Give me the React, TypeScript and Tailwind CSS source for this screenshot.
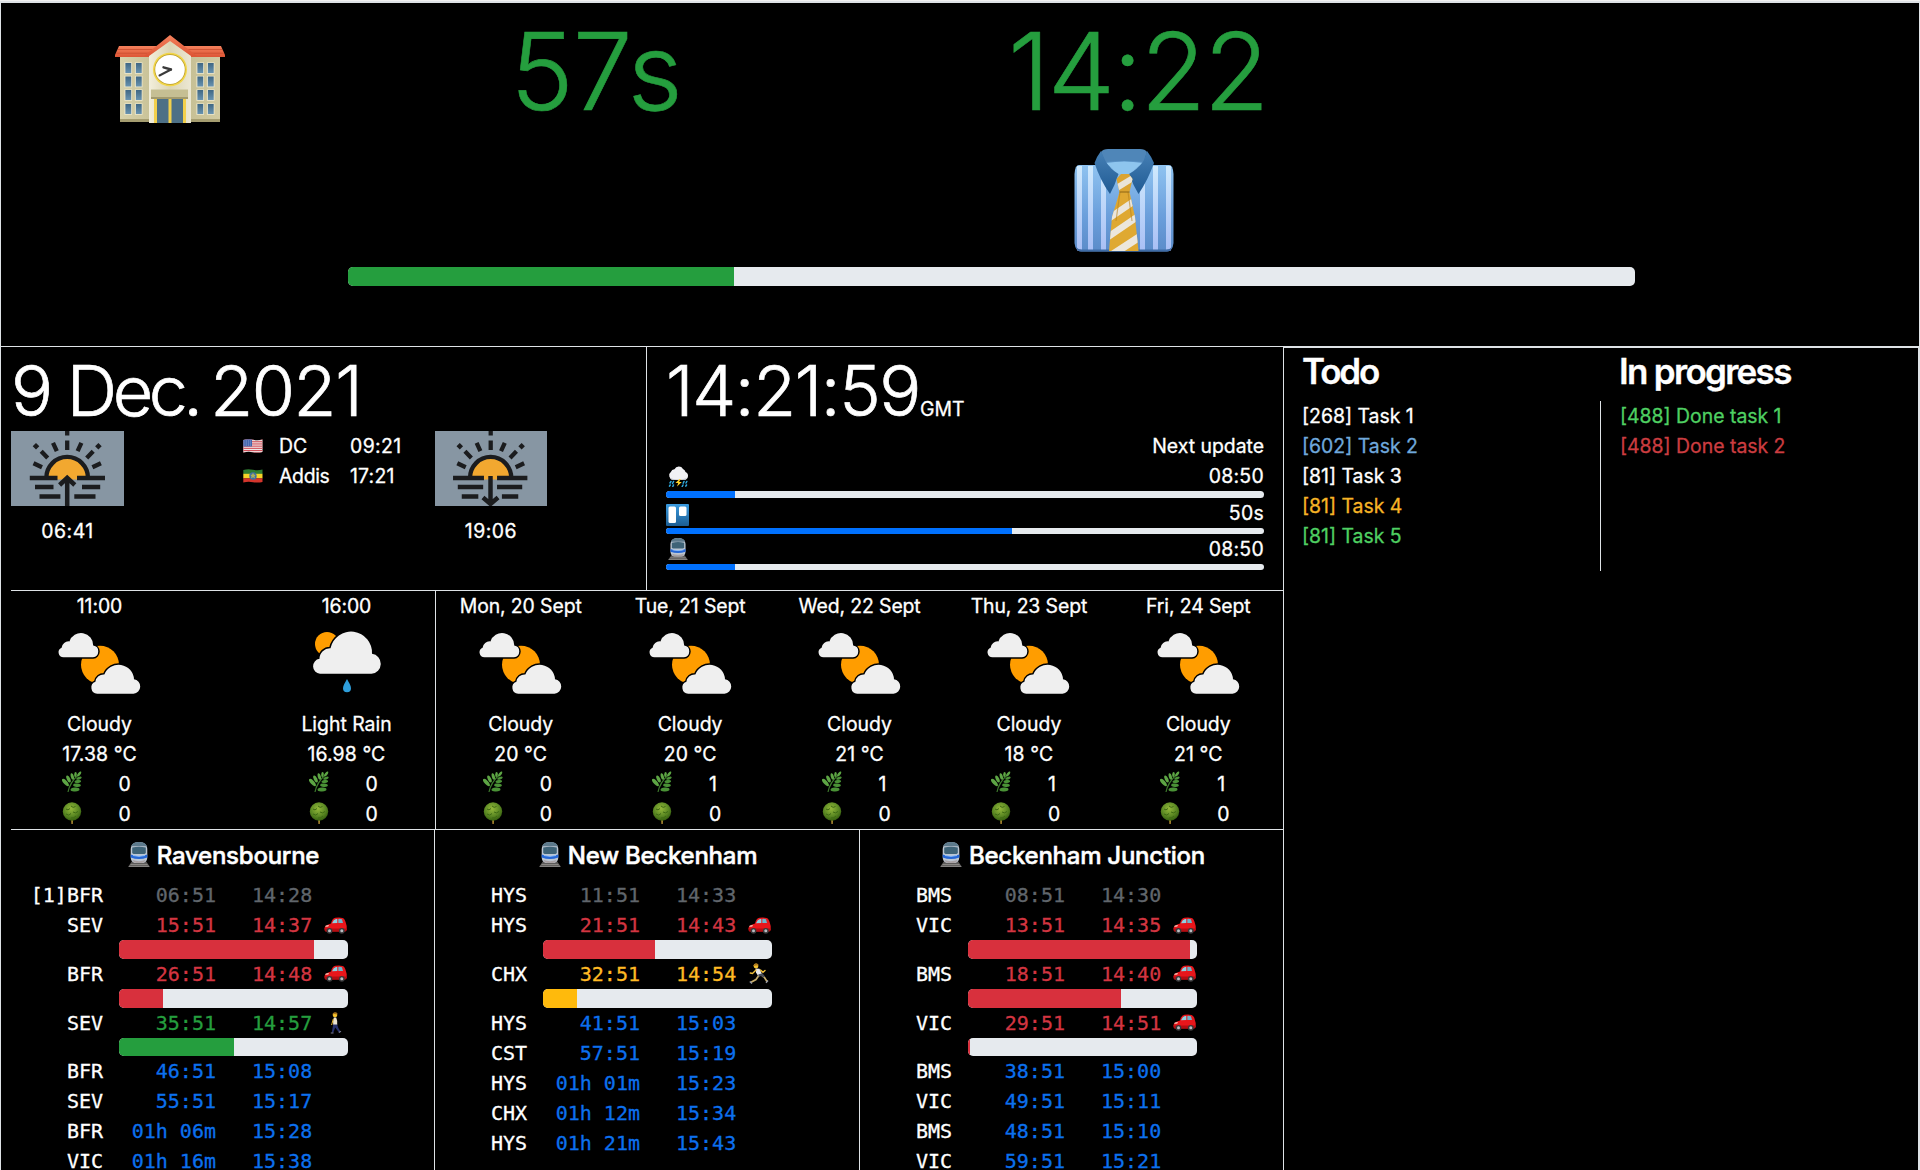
import React from "react";

/* ---------- Icons ---------- */

function SchoolIcon() {
  return (
    <svg viewBox="0 0 110 88" preserveAspectRatio="none" className="h-[88px] w-[110px]">
      <defs>
        <linearGradient id="wall" x1="0" x2="1">
          <stop offset="0" stopColor="#d8d2ab" />
          <stop offset="0.5" stopColor="#bfb88c" />
          <stop offset="1" stopColor="#d2cba2" />
        </linearGradient>
        <linearGradient id="tower" x1="0" x2="1">
          <stop offset="0" stopColor="#f3efdc" />
          <stop offset="0.5" stopColor="#dcd5b4" />
          <stop offset="1" stopColor="#ece8d4" />
        </linearGradient>
        <linearGradient id="roof" x1="0" x2="0" y1="0" y2="1">
          <stop offset="0" stopColor="#f4815c" />
          <stop offset="1" stopColor="#dd5535" />
        </linearGradient>
        <linearGradient id="pane" x1="0" x2="0" y1="0" y2="1">
          <stop offset="0" stopColor="#3f6784" />
          <stop offset="1" stopColor="#6893b0" />
        </linearGradient>
      </defs>
      <rect x="5" y="20" width="100" height="67" fill="url(#wall)" />
      <rect x="5" y="84" width="100" height="3" fill="#a59d70" />
      <path d="M4 11H106L110 20V22H0V20Z" fill="url(#roof)" />
      <path d="M3 14.500H107M1.500 18.200H108.500" stroke="#c94c2f" strokeWidth="0.800" />
      <path d="M34 20L55 3L76 20V88H34Z" fill="url(#tower)" />
      <path d="M55 0L82 21H76L55 6L34 21H29Z" fill="url(#roof)" />
      {[28, 41.5, 55, 69].map((y) =>
        [10, 20.5, 82, 92.5].map((x) => (
          <g key={`${x}-${y}`}>
            <rect x={x - 0.6} y={y - 0.6} width="7.600" height="11.400" fill="#ebe6cc" />
            <rect x={x + 0.4} y={y} width="5.800" height="10" fill="url(#pane)" />
          </g>
        )),
      )}
      <ellipse cx="55" cy="34.500" rx="17" ry="16.800" fill="#f2d648" />
      <ellipse cx="55" cy="34.500" rx="15.500" ry="15.200" fill="#b99b2c" />
      <ellipse cx="55" cy="34.500" rx="14.800" ry="14.600" fill="#fff" />
      <path d="M44.500 40.500L56 34.500" stroke="#3b3b3b" strokeWidth="2" strokeLinecap="round" />
      <path d="M48.500 32.300L56 34.500" stroke="#3b3b3b" strokeWidth="2.400" strokeLinecap="round" />
      <rect x="39" y="63" width="32" height="25" fill="#f2d04c" />
      <rect x="42" y="63" width="11.500" height="25" fill="#4d7086" />
      <rect x="56.500" y="63" width="11.500" height="25" fill="#4d7086" />
      <rect x="36" y="54.500" width="37" height="9" fill="#c6bf93" />
      <rect x="36" y="62" width="37" height="2" fill="#a39b6e" />
    </svg>
  );
}

function ShirtIcon() {
  return (
    <svg viewBox="0 0 100 103" preserveAspectRatio="none" className="h-[103px] w-[100px]">
      <defs>
        <linearGradient id="cloth" x1="0" x2="0" y1="0" y2="1">
          <stop offset="0" stopColor="#8fc3f0" />
          <stop offset="0.6" stopColor="#6a9edb" />
          <stop offset="1" stopColor="#5b8cc9" />
        </linearGradient>
        <linearGradient id="stripe" x1="0" x2="0" y1="0" y2="1">
          <stop offset="0" stopColor="#cfeafd" />
          <stop offset="1" stopColor="#a9bff5" />
        </linearGradient>
        <linearGradient id="collar" x1="0" x2="0" y1="0" y2="1">
          <stop offset="0" stopColor="#4680b5" />
          <stop offset="1" stopColor="#1f5a93" />
        </linearGradient>
        <clipPath id="tieShape">
          <path d="M45.500 43H55.500L61 68L64.500 102H35L38 68Z" />
        </clipPath>
        <clipPath id="knotShape">
          <path d="M47 25H55L58.500 30L55.500 43H45.500L42.500 30Z" />
        </clipPath>
      </defs>
      <path d="M5 16H95Q99 16 99.500 25V94Q98.500 102.500 93 102.500H7Q1.500 102.500 0.500 94V25Q1 16 5 16Z" fill="url(#cloth)" />
      {[3, 14, 27, 66, 79, 92].map((x) => (
        <rect key={x} x={x} y="17" width="5" height="84.500" fill="url(#stripe)" />
      ))}
      <path d="M2 98Q3 102.500 7 102.500H93Q97 102.500 98 98Q96 100.500 92 100.500H8Q4 100.500 2 98Z" fill="#3f6ca6" />
      <path d="M32 1H69L72 14L50 26L28 14Z" fill="#5d95c8" />
      <path d="M32 14Q50 11 69 14L55 25H44Z" fill="#8ec5ee" />
      <path d="M27 3Q29 0 34 0H66Q71 0 73 3L70 13Q50 11 31 13Z" fill="#4f86b8" />
      <path d="M27 2Q23 7 20.500 14Q26 31 36 45Q41 36 44.500 25Q36 20 31.500 12Z" fill="url(#collar)" />
      <path d="M73 2Q77 7 80 14Q74 31 64.500 45Q59 36 55 25Q64 20 69.500 12Z" fill="url(#collar)" />
      <path d="M47 25H55L58.500 30L55.500 43H45.500L42.500 30Z" fill="#dba431" />
      <path d="M40 37L60 25V32L42 43Z" fill="#e9e4d8" clipPath="url(#knotShape)" />
      <g clipPath="url(#tieShape)">
        <rect x="34" y="43" width="32" height="60" fill="#dfa932" />
        <path d="M34 66L66 44V52L34 74Z" fill="#ece7dc" />
        <path d="M34 84L66 62V70L34 92Z" fill="#ece7dc" />
        <path d="M34 104L66 83V92L34 113Z" fill="#ece7dc" />
        <path d="M46 43L42 72M54 43L58 72" stroke="#b8831f" strokeWidth="1.200" opacity="0.600" />
      </g>
      <path d="M45.500 43H55.500" stroke="#8c6414" strokeWidth="1" />
    </svg>
  );
}

function SunHorizonIcon({ rising }: { rising: boolean }) {
  return (
    <svg viewBox="0 0 113 75" preserveAspectRatio="none" className="h-[75px] w-full bg-[#8796a3]">
      <path d="M35.300 46.500A20.800 21 0 0 1 77 46.500V49H35.300Z" fill="#f2a830" />
      <rect x="30" y="48.500" width="52" height="3" fill="#8796a3" />
      <g stroke="#1b1c1e" strokeWidth="4.300" fill="none">
        <path d="M35.300 47A20.800 21 0 0 1 77 47" />
        <path d="M56.200 0V4.500M56.200 9.500V19M42 11.800L45.800 20.200M70.400 11.800L66.600 20.200M30.200 20.300L36.700 27M82.200 20.300L75.700 27M22.500 32.300L31 36.300M89.900 32.300L81.400 36.300" />
        {rising ? (
          <>
            <path d="M18.800 47H46.500M66 47H94M24 56H42.500M71 56H89.200M28.500 65.500H49.400M63.300 65.500H84.500" />
            <path d="M56.200 75V48M48.600 54L56.200 46.800L63.800 54" strokeWidth="4.500" />
          </>
        ) : (
          <>
            <path d="M18.200 47H49.400M62.600 47H93.200M23 56H48.600M62.600 56H88M27 65.500H43.700M67.500 65.500H84" />
            <path d="M56 45V72M48.400 66.500L56 73L63.600 66.500" strokeWidth="4.500" />
          </>
        )}
      </g>
      <path d="M25 12L28.300 15.300L25 18.600L21.700 15.300ZM87.400 12L90.700 15.300L87.400 18.600L84.100 15.300Z" fill="#1b1c1e" />
    </svg>
  );
}

const backCloud =
  "M5.500 25.300A5 5 0 0 1 3.600 15.700A7 7 0 0 1 11.400 9.400A12.200 12.200 0 0 1 35.200 13.600A5.900 5.900 0 0 1 35 25.300Z";
const frontCloud =
  "M39.200 61.800A6.200 6.200 0 0 1 37.400 49.800A8.300 8.300 0 0 1 46.300 42.500A15.400 15.400 0 0 1 76 47.300A7.300 7.300 0 0 1 75.500 61.800Z";

function CloudyIcon() {
  return (
    <svg viewBox="0 0 83 62" className="h-[62px] w-[83px] overflow-visible">
      <circle cx="42" cy="32.700" r="19" fill="#ff9d00" />
      <path d={backCloud} fill="#efefef" stroke="#000" strokeWidth="3" paintOrder="stroke" />
      <path d={frontCloud} fill="#efefef" stroke="#000" strokeWidth="3" paintOrder="stroke" />
    </svg>
  );
}

function LightRainIcon() {
  return (
    <svg viewBox="0 0 70 62" className="h-[62px] w-[70px] overflow-visible">
      <circle cx="15" cy="12" r="12" fill="#ff9d00" />
      <path
        d="M8 41.700A7.500 7.500 0 0 1 7.500 26.800A10.500 10.500 0 0 1 18.500 16.200A21 21 0 0 1 60 21.800A10 10 0 0 1 59.500 41.700Z"
        fill="#efefef"
        stroke="#000"
        strokeWidth="3"
        paintOrder="stroke"
      />
      <path d="M35 47C37 51 39 53.500 39 56.200A4 4 0 0 1 31 56.200C31 53.500 33 51 35 47Z" fill="#2e9edb" />
    </svg>
  );
}

function TrainIcon({ className }: { className: string }) {
  return (
    <svg viewBox="0 0 22 25" preserveAspectRatio="none" className={className}>
      <path d="M4.500 18.500H17.500L22 25H0Z" fill="#5d5b5a" />
      <path d="M2.500 22.500H19.500M1 24.400H21" stroke="#8f8c89" strokeWidth="0.900" />
      <path d="M11 0C16.500 0 19.300 3 19.300 7.500V15C19.300 18.500 17.500 21 14 21H8C4.500 21 2.700 18.500 2.700 15V7.500C2.700 3 5.500 0 11 0Z" fill="#bcc6d2" />
      <path d="M11 0C15.500 0 18 1.600 18.900 4.200H3.100C4 1.600 6.500 0 11 0Z" fill="#5d7a8c" />
      <path d="M4.200 5.500Q11 3.800 17.800 5.500V10.500Q17.500 12 16 12H6Q4.500 12 4.200 10.500Z" fill="#3e6377" />
      <path d="M2.700 12.500Q11 16 19.300 12.500V15.500Q11 18.500 2.700 15.500Z" fill="#2567d6" />
      <path d="M5 13.500Q11 15.200 17 13.500" stroke="#8fc1ff" strokeWidth="0.900" fill="none" />
      <path d="M4.500 18Q11 20.300 17.500 18L16 20.500Q11 21.500 6 20.500Z" fill="#a9a2a4" />
    </svg>
  );
}

function StormIcon() {
  return (
    <svg viewBox="0 0 21 21" className="ml-0.5 h-[21px] w-[21px]">
      <path d="M5 14A4.600 4.600 0 0 1 3 5.800A3.500 3.500 0 0 1 6.500 3.200A4.800 4.800 0 0 1 15 3A4.200 4.200 0 0 1 17.500 6A4.200 4.200 0 0 1 16.500 14Z" fill="#f1f1f4" />
      <path d="M2 12Q10 15 19 12Q18 14 16.500 14H5Q3 14 2 12Z" fill="#c3c5cc" />
      <path d="M11.500 13L7.500 17H10.200L9 20.500L13.800 16H11L12.800 13Z" fill="#ffd126" />
      <path d="M3 15.500L2 17M5.500 15.500L4.500 17.500M2.200 19L1.500 20.200M5.500 19L4.800 20.500M16 15.500L15.200 17.200M18.800 15.500L18 17M15 19L14.200 20.500M18.500 19L17.800 20.200" stroke="#2fa9dd" strokeWidth="1.500" strokeLinecap="round" />
    </svg>
  );
}

function BoardIcon() {
  return (
    <svg viewBox="0 0 23 22" className="mt-1 h-[22px] w-[23px]">
      <defs>
        <linearGradient id="board" x1="0" x2="0" y1="0" y2="1">
          <stop offset="0" stopColor="#3a9be0" />
          <stop offset="1" stopColor="#1b5d93" />
        </linearGradient>
      </defs>
      <rect width="23" height="22" rx="1" fill="url(#board)" />
      <rect x="2.500" y="2.500" width="7.500" height="16.500" rx="1.500" fill="#fff" />
      <rect x="13" y="2.500" width="7.500" height="9.500" rx="1.500" fill="#fff" />
    </svg>
  );
}

function CarIcon() {
  return (
    <svg viewBox="0 0 23 17" className="h-[17px] w-[23px]">
      <path d="M7 6.500Q8 1.500 11.500 0.800Q15 0 18.500 0.900Q21 1.500 22 6.500L22.700 9V13Q22 14.500 20 14.500H2Q0.400 14 0.400 11.500Q0.600 8 7 6.500Z" fill="#e8161b" />
      <path d="M8 6.300Q9.500 2.600 12 2.100L13.300 2V6Z" fill="#8fd0e2" />
      <path d="M14.300 1.900Q17 1.700 18 2.300L19 6L14.300 6.100Z" fill="#6db4cb" />
      <path d="M1.500 8.800Q3 8 5 8L4.300 9.500Q2.500 10 1.200 9.800Z" fill="#f7c8bb" />
      <path d="M0.500 11.500H22.700V13Q22 14.500 20 14.500H2Q0.500 14 0.500 11.500Z" fill="#b50d12" />
      <circle cx="5.500" cy="13.800" r="2.900" fill="#3a3a3c" />
      <circle cx="5.500" cy="13.800" r="1.500" fill="#b9bdc2" />
      <circle cx="17.800" cy="13.800" r="2.900" fill="#3a3a3c" />
      <circle cx="17.800" cy="13.800" r="1.500" fill="#b9bdc2" />
    </svg>
  );
}

function WalkIcon() {
  return (
    <svg viewBox="0 0 23 22" className="h-[22px] w-[23px]">
      <circle cx="11" cy="3" r="2.300" fill="#f5c32d" />
      <path d="M8.600 1.800Q11 -0.800 13.500 1.300L13.100 2.600Q10.500 1.500 8.600 2.600Z" fill="#a8721a" />
      <path d="M9.800 5.500H12.200Q13.800 9 13.200 13H9.200Q8.700 9 9.800 5.500Z" fill="#ebe3cf" />
      <path d="M9.300 7L8 11.500L7.600 13" stroke="#f0bd35" strokeWidth="1" fill="none" />
      <path d="M9.200 12.500H13.200L14.300 16L16.500 19.500L15 20.500L11.200 15.500L9.300 20.800H7.700Z" fill="#26306a" />
      <path d="M6.800 21H9.500M14.800 20.500L17 19.200" stroke="#77798b" strokeWidth="1.200" />
    </svg>
  );
}

function RunIcon() {
  return (
    <svg viewBox="0 0 23 22" className="h-[22px] w-[23px]">
      <circle cx="8" cy="3" r="2.400" fill="#f5c32d" />
      <path d="M5.400 2.200Q7.500 -0.800 10.500 1.500L10 2.600Q7.500 2 5.400 3.200Z" fill="#b07b1f" />
      <path d="M7.500 5.500L11.500 5.800L14.500 12L10.500 13.500L8 9.500Z" fill="#e9e9ec" />
      <path d="M8 7L4.500 10.500L2.300 10M12.500 7L15 9.300L17 7.500" stroke="#f2c03a" strokeWidth="1.400" fill="none" strokeLinecap="round" />
      <path d="M10.800 12.500L8 16.500L3 19.300M13.500 12L16.500 14.500L19 18.500" stroke="#c9ae6c" strokeWidth="1.700" fill="none" />
      <path d="M10.500 12.600L14 11.500L16 14" stroke="#4a4d57" strokeWidth="2.200" fill="none" />
      <path d="M1.800 18.500L4 20.500M18 19.700L20 17.500" stroke="#9a9ca5" strokeWidth="1.400" />
    </svg>
  );
}

function HerbIcon() {
  return (
    <svg viewBox="0 0 20 22" className="h-[22px] w-5">
      <path d="M6 21Q7.500 12 17 3" stroke="#3d7a2c" strokeWidth="1.200" fill="none" />
      <g fill="#5da544">
        <ellipse cx="3.500" cy="11.500" rx="4.600" ry="1.900" transform="rotate(48 3.500 11.500)" />
        <ellipse cx="6.500" cy="8" rx="3.800" ry="1.700" transform="rotate(65 6.500 8)" />
        <ellipse cx="10.300" cy="5.500" rx="3.300" ry="1.500" transform="rotate(75 10.300 5.500)" />
        <ellipse cx="13.500" cy="3.500" rx="2.600" ry="1.300" transform="rotate(95 13.500 3.500)" />
        <ellipse cx="17.200" cy="3" rx="2.900" ry="1.300" transform="rotate(-55 17.200 3)" />
      </g>
      <g fill="#4a9236">
        <ellipse cx="13" cy="18.500" rx="4.500" ry="2" transform="rotate(-4 13 18.500)" />
        <ellipse cx="15" cy="14.300" rx="3.900" ry="1.700" transform="rotate(4 15 14.300)" />
        <ellipse cx="15.800" cy="10.500" rx="3.300" ry="1.500" transform="rotate(-8 15.800 10.500)" />
        <ellipse cx="17" cy="7.200" rx="2.800" ry="1.300" transform="rotate(-20 17 7.200)" />
      </g>
    </svg>
  );
}

function TreeIcon() {
  return (
    <svg viewBox="0 0 20 22" className="h-[22px] w-5">
      <defs>
        <radialGradient id="leaves" cx="0.450" cy="0.350" r="0.650">
          <stop offset="0" stopColor="#93b83a" />
          <stop offset="0.600" stopColor="#5d8a24" />
          <stop offset="1" stopColor="#36600f" />
        </radialGradient>
      </defs>
      <path d="M9 16H11.200L10.800 22H9.400Z" fill="#a8842f" />
      <ellipse cx="10" cy="9.500" rx="9.200" ry="9.200" fill="url(#leaves)" />
      <path d="M4 7Q6 9 8 6.500M9 4Q11 6.500 13.500 4.500M11 10Q13.500 12 16 9.500M4 12Q7 14.500 9 11.500M9 16Q12 16.500 14 14" stroke="#3e6a14" strokeWidth="1" fill="none" />
    </svg>
  );
}

function UsFlag() {
  return (
    <svg viewBox="0 0 20 14" className="h-3.5 w-5">
      <defs>
        <clipPath id="usWave">
          <path d="M0.300 1Q5 -0.300 10 0.800T19.500 0.500V13Q15 14 10 13.200T0.300 13.500Z" />
        </clipPath>
      </defs>
      <g clipPath="url(#usWave)">
        <rect width="20" height="14" fill="#f0e6e6" />
        {[0, 2.2, 4.4, 6.6, 8.8, 11, 13.2].map((y) => (
          <rect key={y} y={y} width="20" height="1.100" fill="#d2505a" />
        ))}
        <rect width="9" height="7.500" fill="#4065ae" />
        <path d="M1.500 2H8M1.500 4H8M1.500 6H8" stroke="#c4cfe8" strokeWidth="0.700" strokeDasharray="0.800 1" />
      </g>
    </svg>
  );
}

function EthiopiaFlag() {
  return (
    <svg viewBox="0 0 20 14" className="h-3.5 w-5">
      <defs>
        <clipPath id="etWave">
          <path d="M0.300 1Q5 -0.300 10 0.800T19.500 0.500V13Q15 14 10 13.200T0.300 13.500Z" />
        </clipPath>
      </defs>
      <g clipPath="url(#etWave)">
        <rect width="20" height="5" fill="#2e7d32" />
        <rect y="4.800" width="20" height="4.600" fill="#f5d327" />
        <rect y="9.300" width="20" height="5" fill="#d4352c" />
        <circle cx="10" cy="7" r="3.700" fill="#3d6ea5" />
        <path d="M10 4.500L11.500 8.800L7.800 6.200H12.200L8.500 8.800Z" fill="none" stroke="#c9c24a" strokeWidth="0.700" />
      </g>
    </svg>
  );
}

/* ---------- Shared pieces ---------- */

function Progress({ value, className, fill }: { value: number; className: string; fill: string }) {
  return (
    <div className={`overflow-hidden bg-[#e6eaee] ${className}`}>
      <div className={`h-full ${fill}`} style={{ width: `${value}%` }} />
    </div>
  );
}

/* ---------- Top banner ---------- */

function Banner() {
  return (
    <section className="flex h-[343px] flex-col">
      <div className="flex h-[264px] pt-[15px] font-light text-[#259e3e] [-webkit-text-stroke:0.6px]">
        <div className="flex w-[338px] justify-center pt-[17px]">
          <SchoolIcon />
        </div>
        <div className="w-[514px] text-center text-[107px] leading-[107px] tracking-[-1px]">57s</div>
        <div className="flex w-[541px] flex-col items-center">
          <div className="ml-[28px] text-[107px] leading-[107px] tracking-[-2.4px]">14:22</div>
          <div className="mt-6">
            <ShirtIcon />
          </div>
        </div>
      </div>
      <Progress value={30} className="ml-[347px] h-[19px] w-[1287px] rounded-[5px]" fill="bg-[#259e3e]" />
    </section>
  );
}

/* ---------- Date and clock ---------- */

function DatePanel() {
  return (
    <div className="w-[645px] pl-2.5 pt-[5px]">
      <h1 className="mb-0.5 whitespace-nowrap text-[70px] font-light leading-[77px] [-webkit-text-stroke:0.7px]">
        <span className="tracking-[-4.5px] [word-spacing:3px]">9 Dec.</span>
        <span className="tracking-[-1.4px] [word-spacing:-6.7px]"> 2021</span>
      </h1>
      <div className="grid w-[636px] grid-cols-3">
        <div className="flex w-[113px] flex-col items-center gap-2.5">
          <SunHorizonIcon rising />
          <span className="tracking-[0.5px]">06:41</span>
        </div>
        <div className="grid h-[60px] grid-cols-[36px_71px_auto] pl-5">
          <span className="flex items-center"><UsFlag /></span>
          <span>DC</span>
          <span className="tracking-[0.4px]">09:21</span>
          <span className="flex items-center"><EthiopiaFlag /></span>
          <span className="tracking-[-0.3px]">Addis</span>
          <span className="tracking-[0.2px]">17:21</span>
        </div>
        <div className="flex w-[112px] flex-col items-center gap-2.5">
          <SunHorizonIcon rising={false} />
          <span className="tracking-[0.5px]">19:06</span>
        </div>
      </div>
    </div>
  );
}

const updates = [
  { icon: <StormIcon />, left: "08:50", value: 11.5, bar: "h-[7px]" },
  { icon: <BoardIcon />, left: "50s", value: 57.8, bar: "h-1.5" },
  { icon: <TrainIcon className="ml-0.5 h-[22px] w-5" />, left: "08:50", value: 11.5, bar: "h-1.5" },
];

function ClockPanel() {
  return (
    <div className="flex-1 border-l border-[#dee2e6] pl-[19px] pr-[19px] pt-[5px]">
      <div className="mb-0.5 flex h-[77px] items-baseline">
        <span className="text-[70px] font-light leading-[77px] tracking-[-1.4px] [-webkit-text-stroke:0.7px]">14:21:59</span>
        <span>GMT</span>
      </div>
      <div className="text-right">Next update</div>
      {updates.map((u, i) => (
        <div key={i}>
          <div className="flex h-[30px] items-center justify-between">
            {u.icon}
            <span className="tracking-[0.3px]">{u.left}</span>
          </div>
          <Progress value={u.value} className={`rounded-[4px] ${u.bar}`} fill="bg-[#0071ff]" />
        </div>
      ))}
    </div>
  );
}

/* ---------- Weather ---------- */

type Forecast = { when: string; rain?: boolean; label: string; temp: string; grass: number; tree: number };

const today: Forecast[] = [
  { when: "11:00", label: "Cloudy", temp: "17.38 °C", grass: 0, tree: 0 },
  { when: "16:00", rain: true, label: "Light Rain", temp: "16.98 °C", grass: 0, tree: 0 },
];

const week: Forecast[] = [
  { when: "Mon, 20 Sept", label: "Cloudy", temp: "20 °C", grass: 0, tree: 0 },
  { when: "Tue, 21 Sept", label: "Cloudy", temp: "20 °C", grass: 1, tree: 0 },
  { when: "Wed, 22 Sept", label: "Cloudy", temp: "21 °C", grass: 1, tree: 0 },
  { when: "Thu, 23 Sept", label: "Cloudy", temp: "18 °C", grass: 1, tree: 0 },
  { when: "Fri, 24 Sept", label: "Cloudy", temp: "21 °C", grass: 1, tree: 0 },
];

function ForecastColumn({ f, className }: { f: Forecast; className: string }) {
  return (
    <div className={`flex flex-col items-center ${className}`}>
      <span className="tracking-[-0.1px]">{f.when}</span>
      <div className="flex h-[88px] pt-[11px]">{f.rain ? <LightRainIcon /> : <CloudyIcon />}</div>
      <span>{f.label}</span>
      <span className="tracking-[0.1px]">{f.temp}</span>
      <div className="grid w-[76px] grid-cols-[57px_19px]">
        <span className="flex h-[30px] items-center pb-1"><HerbIcon /></span>
        <span>{f.grass}</span>
        <span className="flex h-[30px] items-center pb-[3px]"><TreeIcon /></span>
        <span>{f.tree}</span>
      </div>
    </div>
  );
}

function Weather() {
  return (
    <section className="ml-2.5 flex h-[239px] border-t border-[#dee2e6]">
      <div className="flex w-[424px] justify-between">
        {today.map((f) => (
          <ForecastColumn key={f.when} f={f} className="w-[177px]" />
        ))}
      </div>
      <div className="flex flex-1 border-l border-[#dee2e6]">
        {week.map((f) => (
          <ForecastColumn key={f.when} f={f} className="flex-1" />
        ))}
      </div>
    </section>
  );
}

/* ---------- Trains ---------- */

type Tone = "muted" | "red" | "green" | "yellow" | "blue";
type Departure = { code: string; platform?: string; wait: string; at: string; tone: Tone; mode?: "car" | "walk" | "run"; value?: number };

const toneText: Record<Tone, string> = {
  muted: "text-[#60666c]",
  red: "text-[#d33541]",
  green: "text-[#259e3e]",
  yellow: "text-[#ffba24]",
  blue: "text-[#0c70ee]",
};
const toneFill: Record<Tone, string> = {
  muted: "bg-[#60666c]",
  red: "bg-[#d8303d]",
  green: "bg-[#259e3e]",
  yellow: "bg-[#ffba0c]",
  blue: "bg-[#0071ff]",
};
const modeIcon = { car: <CarIcon />, walk: <WalkIcon />, run: <RunIcon /> };

const stations: { name: string; departures: Departure[] }[] = [
  {
    name: "Ravensbourne",
    departures: [
      { code: "BFR", platform: "[1]", wait: "06:51", at: "14:28", tone: "muted" },
      { code: "SEV", wait: "15:51", at: "14:37", tone: "red", mode: "car", value: 85.2 },
      { code: "BFR", wait: "26:51", at: "14:48", tone: "red", mode: "car", value: 19.2 },
      { code: "SEV", wait: "35:51", at: "14:57", tone: "green", mode: "walk", value: 50.2 },
      { code: "BFR", wait: "46:51", at: "15:08", tone: "blue" },
      { code: "SEV", wait: "55:51", at: "15:17", tone: "blue" },
      { code: "BFR", wait: "01h 06m", at: "15:28", tone: "blue" },
      { code: "VIC", wait: "01h 16m", at: "15:38", tone: "blue" },
    ],
  },
  {
    name: "New Beckenham",
    departures: [
      { code: "HYS", wait: "11:51", at: "14:33", tone: "muted" },
      { code: "HYS", wait: "21:51", at: "14:43", tone: "red", mode: "car", value: 49.1 },
      { code: "CHX", wait: "32:51", at: "14:54", tone: "yellow", mode: "run", value: 14.9 },
      { code: "HYS", wait: "41:51", at: "15:03", tone: "blue" },
      { code: "CST", wait: "57:51", at: "15:19", tone: "blue" },
      { code: "HYS", wait: "01h 01m", at: "15:23", tone: "blue" },
      { code: "CHX", wait: "01h 12m", at: "15:34", tone: "blue" },
      { code: "HYS", wait: "01h 21m", at: "15:43", tone: "blue" },
    ],
  },
  {
    name: "Beckenham Junction",
    departures: [
      { code: "BMS", wait: "08:51", at: "14:30", tone: "muted" },
      { code: "VIC", wait: "13:51", at: "14:35", tone: "red", mode: "car", value: 97 },
      { code: "BMS", wait: "18:51", at: "14:40", tone: "red", mode: "car", value: 66.8 },
      { code: "VIC", wait: "29:51", at: "14:51", tone: "red", mode: "car", value: 0.9 },
      { code: "BMS", wait: "38:51", at: "15:00", tone: "blue" },
      { code: "VIC", wait: "49:51", at: "15:11", tone: "blue" },
      { code: "BMS", wait: "48:51", at: "15:10", tone: "blue" },
      { code: "VIC", wait: "59:51", at: "15:21", tone: "blue" },
    ],
  },
];

const stationWidths = ["w-[423px]", "w-[425px] border-l", "flex-1 border-l"];

function Trains() {
  return (
    <section className="ml-2.5 flex h-[341px] border-t border-[#dee2e6]">
      {stations.map((s, i) => (
        <div key={s.name} className={`border-[#dee2e6] ${stationWidths[i]}`}>
          <h5 className="flex h-[50px] justify-center gap-[7px] pl-[2px] pt-3 text-[24px] font-medium leading-[27px] tracking-[-0.25px] [-webkit-text-stroke:0.5px]">
            <TrainIcon className="h-[25px] w-[22px]" />
            <span>{s.name}</span>
          </h5>
          {s.departures.map((d, k) => (
            <div key={k} className="font-['DejaVu_Sans_Mono',monospace] text-[20px]">
              <div className={`grid h-[30px] grid-cols-[92px_113px_36px_72px_auto] ${toneText[d.tone]}`}>
                <span className="whitespace-nowrap text-right text-white">{d.platform}{d.code}</span>
                <span className="text-right">{d.wait}</span>
                <span />
                <span>{d.at}</span>
                <span className="flex items-center">{d.mode && modeIcon[d.mode]}</span>
              </div>
              {d.value !== undefined && (
                <Progress value={d.value} className="ml-[108px] h-[18.8px] w-[229px] rounded-[5px]" fill={toneFill[d.tone]} />
              )}
            </div>
          ))}
        </div>
      ))}
    </section>
  );
}

/* ---------- Tasks ---------- */

const todo = [
  { text: "[268] Task 1", color: "text-white" },
  { text: "[602] Task 2", color: "text-[#6fa8dc]" },
  { text: "[81] Task 3", color: "text-white" },
  { text: "[81] Task 4", color: "text-[#f6b426]" },
  { text: "[81] Task 5", color: "text-[#4fd062]" },
];
const inProgress = [
  { text: "[488] Done task 1", color: "text-[#4fd062]" },
  { text: "[488] Done task 2", color: "text-[#cc3d40]" },
];

function TaskPanel() {
  return (
    <aside className="flex-1 border-l border-r-2 border-t-2 border-[#dee2e6] pl-[18px]">
      <div className="grid grid-cols-[317px_auto] pt-[2px] text-[35px] font-semibold leading-[43px]">
        <h2 className="tracking-[-2.2px]">Todo</h2>
        <h2 className="tracking-[-1.7px]">In progress</h2>
      </div>
      <div className="mt-2 grid h-[170px] grid-cols-[298px_auto]">
        <ul>
          {todo.map((t) => (
            <li key={t.text} className={t.color}>{t.text}</li>
          ))}
        </ul>
        <ul className="border-l border-[#dee2e6] pl-[19px]">
          {inProgress.map((t) => (
            <li key={t.text} className={t.color}>{t.text}</li>
          ))}
        </ul>
      </div>
    </aside>
  );
}

export default function App() {
  return (
    <div className="h-[1170px] w-[1920px] overflow-hidden border-t border-[#f1f1f1] bg-black font-['Inter',sans-serif] text-[19.4px] leading-[30px] text-white [-webkit-text-stroke:0.3px]">
      <div className="h-[1169px] border-l border-t-2 border-[#dee2e6]">
        <div className="border-r border-[#dee2e6]">
          <Banner />
        </div>
        <div className="flex h-[824px]">
          <main className="w-[1282px] border-t border-[#dee2e6]">
            <div className="flex h-[243px]">
              <DatePanel />
              <ClockPanel />
            </div>
            <Weather />
            <Trains />
          </main>
          <TaskPanel />
        </div>
      </div>
    </div>
  );
}
